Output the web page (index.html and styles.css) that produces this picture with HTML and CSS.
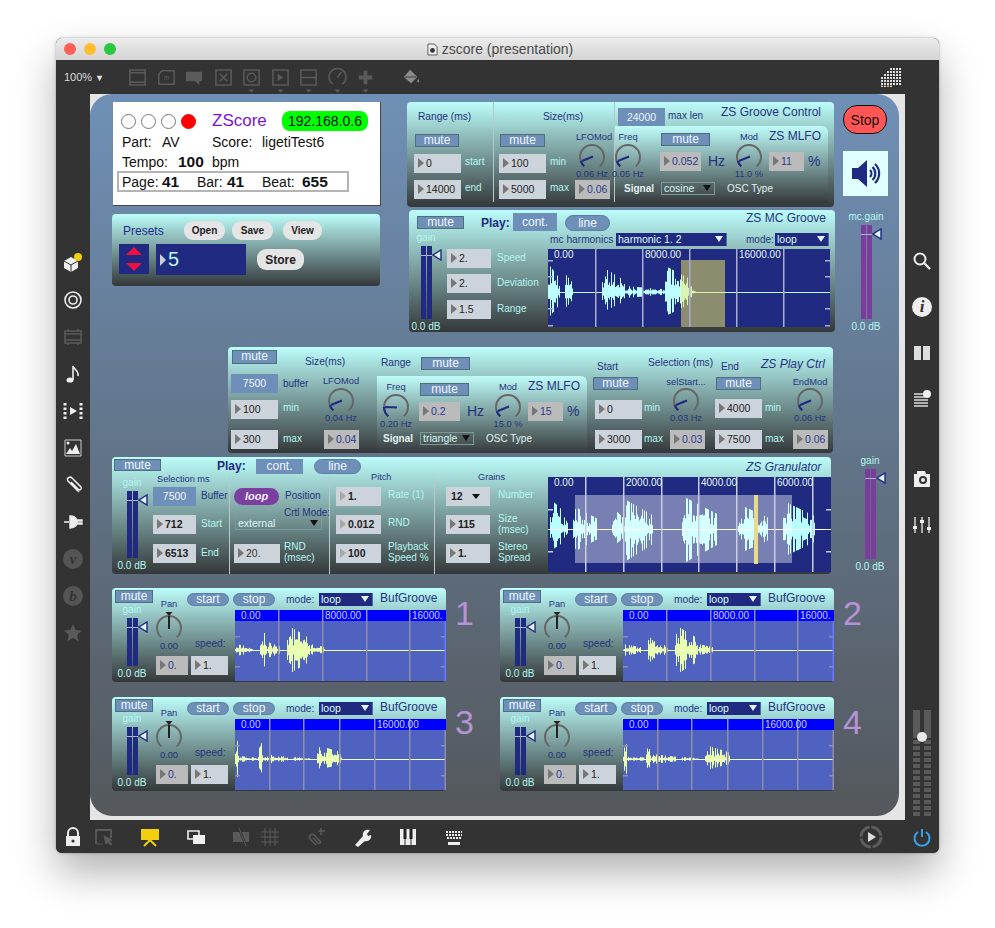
FILE: index.html
```html
<!DOCTYPE html>
<html lang="en">
<head>
  <meta charset="UTF-8" />
  <title>zscore (presentation)</title>
  <link rel="stylesheet" href="styles.css">
</head>
<body>

<!-- shared widget shapes -->
<svg class="defs">
  <symbol id="knob-low" viewBox="0 0 26 26">
    <path d="M5.3 22.2A12 12 0 1 1 20.7 22.2" fill="none" stroke="#666" stroke-width="2"/>
    <path d="M5.3 22.2A12 12 0 0 1 1.7 17.1M14 12.5L3 17" fill="none" stroke="#1f2a80" stroke-width="2"/>
  </symbol>
  <symbol id="knob-flat" viewBox="0 0 26 26">
    <path d="M5.3 22.2A12 12 0 1 1 20.7 22.2" fill="none" stroke="#666" stroke-width="2"/>
    <path d="M5.3 22.2A12 12 0 0 1 1 13M14 13.5L2 13" fill="none" stroke="#1f2a80" stroke-width="2"/>
  </symbol>
  <symbol id="knob-pan" viewBox="0 0 26 26">
    <path d="M5.3 22.2A12 12 0 1 1 20.7 22.2" fill="none" stroke="#666" stroke-width="2"/>
    <path d="M13 14V1" stroke="#222" stroke-width="2"/>
    <path d="M9.5 -3h7L13 1z" fill="#222"/>
  </symbol>
  <symbol id="tri" viewBox="0 0 10 12">
    <path d="M9 1V11L1 6z" fill="#e4f4ff" stroke="#1f2a80" stroke-width="1.4"/>
  </symbol>
</svg>

<div class="window">
  <div class="titlebar">
    <div class="lights"><i class="red"></i><i class="amber"></i><i class="green"></i></div>
    <svg class="doc" viewBox="0 0 12 14"><path d="M1 1h7l3 3v9H1z" fill="#eee" stroke="#555"/><circle cx="6" cy="8" r="2.6" fill="#333"/></svg>
    <span>zscore (presentation)</span>
  </div>

  <div class="toolbar">
    <span class="zoom">100% <b>▾</b></span>
    <div class="tools">
      <svg viewBox="0 0 20 20"><path d="M2 2h16v16H2zM2 5h16M2 15h16" /></svg>
      <svg viewBox="0 0 20 20"><path d="M5 3h13v14H2V6z" /><text x="7" y="13" class="tool-m">m</text></svg>
      <svg viewBox="0 0 20 20"><path class="solid" d="M1 4h17v10h-3v4l-4-4H1z" /></svg>
      <svg viewBox="0 0 20 20"><path d="M2 2h16v16H2zM6 6l8 8M14 6l-8 8" /></svg>
      <svg viewBox="0 0 20 20"><path d="M2 2h16v16H2z" /><circle cx="10" cy="10" r="4.5" /><path class="solid" d="M7 22.500h6l-3 3.500z" /></svg>
      <svg viewBox="0 0 20 20"><path d="M2 2h16v16H2z" /><path class="solid" d="M7 6l6 4-6 4z" /><path class="solid" d="M7 22.500h6l-3 3.500z" /></svg>
      <svg viewBox="0 0 20 20"><path d="M2 2h16v16H2zM2 10h16" /><path class="solid" d="M7 22.500h6l-3 3.500z" /></svg>
      <svg viewBox="0 0 20 20"><path d="M5 17A9 9 0 1 1 15 17M10 10l4-6" /><path class="solid" d="M7 22.500h6l-3 3.500z" /></svg>
      <svg viewBox="0 0 20 20"><path class="thick" d="M10 3v14M3 10h14" /><path class="solid" d="M7 22.500h6l-3 3.500z" /></svg>
    </div>
    <svg class="bucket" viewBox="0 0 20 20"><path d="M9 2l8 8-7 7-8-7z" fill="#8c8c8c"/><path d="M3 10h13" stroke="#333"/><path d="M18 12c1.5 2.500 1.500 4 0 4s-1.500-1.500 0-4z" fill="#8c8c8c"/></svg>
    <svg class="dotgrid" viewBox="0 0 21 19">
      <path d="M9 1h12M6 4h15M3 7h18M0 10h21M0 13h21M0 16h21" stroke="#ddd" stroke-width="2" stroke-dasharray="2 1"/>
      <path d="M0 18.500h12" stroke="#ddd" stroke-width="1.500" stroke-dasharray="2 1"/>
      <path d="M6 18.500h2" stroke="#f0d010" stroke-width="1.500"/>
    </svg>
  </div>

  <div class="main">
    <div class="side side-left">
      <svg class="ic" viewBox="0 0 20 20"><path d="M8 4l7 4v7l-7 4-7-4V8z" fill="#eee"/><path d="M1 8l7 4 7-4M8 12v7" stroke="#333" fill="none"/><circle cx="15" cy="4" r="4" fill="#f0d010"/></svg>
      <svg class="ic" viewBox="0 0 20 20"><circle cx="10" cy="10" r="8" fill="none" stroke="#eee" stroke-width="1.600"/><circle cx="10" cy="10" r="4" fill="none" stroke="#eee" stroke-width="1.600"/></svg>
      <svg class="ic dim" viewBox="0 0 20 20"><path d="M2 4h16v12H2zM2 7h16M2 13h16M5 2v2M15 2v2M5 16v2M15 16v2" fill="none" stroke="#595959" stroke-width="1.600"/></svg>
      <svg class="ic" viewBox="0 0 20 20"><ellipse cx="7" cy="16" rx="3.500" ry="2.600" fill="#eee"/><path d="M10 16V2c1 4 6 4 5 10" fill="none" stroke="#eee" stroke-width="1.600"/></svg>
      <svg class="ic" viewBox="0 0 20 20"><path d="M7 6l7 4-7 4z" fill="#eee"/><path d="M2 2v16M18 2v16" stroke="#eee" stroke-width="3" stroke-dasharray="2.500 2"/></svg>
      <svg class="ic" viewBox="0 0 20 20"><path d="M2 2h16v16H2z" fill="none" stroke="#ccc"/><path d="M3 16l4-6 2 3 4-7 4 10z" fill="#eee"/><circle cx="5" cy="5" r="1.500" fill="#eee"/></svg>
      <svg class="ic" viewBox="0 0 20 20"><path d="M16 17L5 6c-2-3 2-5 4-3l9 9c1 2-1 4-3 2L8 7" fill="none" stroke="#eee" stroke-width="1.500"/></svg>
      <svg class="ic" viewBox="0 0 20 20"><path d="M1 10h5M7 4v12c3 0 6-2 7-4h5v-1h-5V9h5V8h-5c-1-2-4-4-7-4z" fill="#eee" stroke="#eee" stroke-width="1.400"/></svg>
      <div class="round-ic"><i>v</i></div>
      <div class="round-ic"><i>b</i></div>
      <svg class="ic dim" viewBox="0 0 20 20"><path d="M10 1l2.700 6 6.300.6-4.800 4.200 1.500 6.400L10 15l-5.700 3.200 1.500-6.400L1 7.600 7.300 7z" fill="#595959"/></svg>
    </div>

    <div class="canvas">
      <div class="patch">

        <!-- status card -->
        <div class="zs-card">
          <div class="zs-head">
            <div class="leds"><i></i><i></i><i></i><i class="on"></i></div>
            <span class="zs-name">ZScore</span>
            <span class="zs-ip">192.168.0.6</span>
          </div>
          <div class="zs-row zs-row-part"><span>Part:</span><span>AV</span><span>Score:</span><span>ligetiTest6</span></div>
          <div class="zs-row zs-row-tempo"><span>Tempo:</span><b>100</b><span>bpm</span></div>
          <div class="zs-row zs-row-pos"><span>Page:</span><b>41</b><span>Bar:</span><b>41</b><span>Beat:</span><b>655</b></div>
        </div>

        <!-- presets -->
        <div class="panel presets">
          <span class="presets-title">Presets</span>
          <div class="presets-btns"><button>Open</button><button>Save</button><button>View</button></div>
          <div class="updown"><svg viewBox="0 0 30 30"><path d="M15 3l8 8H7zM15 27l-8-8h16z" fill="#f01040"/></svg></div>
          <div class="preset-num">5</div>
          <button class="store">Store</button>
        </div>

        <!-- groove control -->
        <div class="panel gc">
          <span class="lbl dk big gc-range">Range (ms)</span>
          <span class="lbl dk big gc-size">Size(ms)</span>
          <div class="mute gc-m1">mute</div>
          <div class="mute gc-m2">mute</div>
          <div class="num gc-n1">0</div><span class="lbl lt gc-l1">start</span>
          <div class="num gc-n2">14000</div><span class="lbl lt gc-l2">end</span>
          <div class="num gc-n3">100</div><span class="lbl lt gc-l3">min</span>
          <div class="num gc-n4">5000</div><span class="lbl lt gc-l4">max</span>
          <span class="lbl dk ctr gc-lfo">LFOMod</span>
          <svg class="knob gc-k"><use href="#knob-low"/></svg>
          <span class="lbl dk ctr gc-hz">0.06 Hz</span>
          <div class="num gray small gc-n5">0.06</div>
          <i class="divider gc-d1"></i>
          <i class="divider gc-d2"></i>
          <div class="num flat gc-max">24000</div><span class="lbl dk gc-maxl">max len</span>
          <span class="title gc-title">ZS Groove Control</span>
          <div class="mlfo gc-mlfo">
            <div class="mlfo-body">
              <span class="lbl dk ctr m-freq-l">Freq</span>
              <svg class="knob m-freq-k"><use href="#knob-low"/></svg>
              <span class="lbl dk ctr m-freq-v">0.05 Hz</span>
              <div class="mute m-mute">mute</div>
              <div class="num gray m-num">0.052</div>
              <span class="m-hz">Hz</span>
              <span class="lbl dk ctr m-mod-l">Mod</span>
              <svg class="knob m-mod-k"><use href="#knob-low"/></svg>
              <span class="lbl dk ctr m-mod-v">11.0 %</span>
              <span class="title m-title">ZS MLFO</span>
              <div class="num gray small m-num2">11</div>
              <span class="m-pct">%</span>
              <span class="lbl wh strong m-sig">Signal</span>
              <div class="menu m-menu">cosine</div>
              <span class="lbl wh m-osc">OSC Type</span>
            </div>
          </div>
        </div>

        <!-- mc groove -->
        <div class="panel mc">
          <div class="mute mc-mute">mute</div>
          <span class="play-l mc-play">Play:</span>
          <div class="num flat mc-cont">cont.</div>
          <div class="pill mc-line">line</div>
          <span class="title mc-title">ZS MC Groove</span>
          <div class="gain mc-gain">
            <span class="lt">gain</span>
            <div class="meter meter-mc"><svg class="tri"><use href="#tri"/></svg></div>
            <span class="lt">0.0 dB</span>
          </div>
          <div class="num mc-n1">2.</div><span class="lbl lt mc-l1">Speed</span>
          <div class="num mc-n2">2.</div><span class="lbl lt mc-l2">Deviation</span>
          <div class="num mc-n3">1.5</div><span class="lbl lt mc-l3">Range</span>
          <span class="lbl dk big mc-harm">mc harmonics</span>
          <div class="menu blue mc-menu1">harmonic 1. 2</div>
          <span class="lbl dk mc-mode">mode:</span>
          <div class="menu blue mc-menu2">loop</div>
          <div class="wave wave-mc" data-wave="mc">
            <span class="mc-t1">0.00</span><span class="mc-t2">8000.00</span><span class="mc-t3">16000.00</span>
          </div>
        </div>

        <!-- play ctrl -->
        <div class="panel pc">
          <div class="mute pc-m1">mute</div>
          <span class="lbl dk big pc-size">Size(ms)</span>
          <span class="lbl dk big pc-range">Range</span>
          <div class="mute pc-m2">mute</div>
          <div class="num flat pc-buf">7500</div><span class="lbl dk pc-bufl">buffer</span>
          <div class="num pc-n1">100</div><span class="lbl lt pc-l1">min</span>
          <div class="num pc-n2">300</div><span class="lbl lt pc-l2">max</span>
          <span class="lbl dk ctr pc-lfo">LFOMod</span>
          <svg class="knob pc-k1"><use href="#knob-low"/></svg>
          <span class="lbl dk ctr pc-lfov">0.04 Hz</span>
          <div class="num gray small pc-n3">0.04</div>
          <div class="mlfo mlfo-play">
            <div class="mlfo-body">
              <span class="lbl dk ctr m-freq-l">Freq</span>
              <svg class="knob m-freq-k"><use href="#knob-flat"/></svg>
              <span class="lbl dk ctr m-freq-v">0.20 Hz</span>
              <div class="mute m-mute">mute</div>
              <div class="num gray m-num">0.2</div>
              <span class="m-hz">Hz</span>
              <span class="lbl dk ctr m-mod-l">Mod</span>
              <svg class="knob m-mod-k"><use href="#knob-low"/></svg>
              <span class="lbl dk ctr m-mod-v">15.0 %</span>
              <span class="title m-title">ZS MLFO</span>
              <div class="num gray small m-num2">15</div>
              <span class="m-pct">%</span>
              <span class="lbl wh strong m-sig">Signal</span>
              <div class="menu m-menu">triangle</div>
              <span class="lbl wh m-osc">OSC Type</span>
            </div>
          </div>
          <span class="lbl dk pc-start">Start</span>
          <span class="lbl dk big pc-sel">Selection (ms)</span>
          <span class="lbl dk pc-end">End</span>
          <span class="title ital pc-title">ZS Play Ctrl</span>
          <div class="mute pc-m3">mute</div>
          <span class="lbl dk ctr pc-selst">selStart...</span>
          <svg class="knob pc-k2"><use href="#knob-low"/></svg>
          <span class="lbl dk ctr pc-selv">0.03 Hz</span>
          <div class="mute pc-m4">mute</div>
          <span class="lbl dk ctr pc-endm">EndMod</span>
          <svg class="knob pc-k3"><use href="#knob-low"/></svg>
          <span class="lbl dk ctr pc-endv">0.06 Hz</span>
          <div class="num pc-n4">0</div><span class="lbl lt pc-l4">min</span>
          <div class="num pc-n5">3000</div><span class="lbl lt pc-l5">max</span>
          <div class="num gray small pc-n6">0.03</div>
          <div class="num pc-n7">4000</div><span class="lbl lt pc-l7">min</span>
          <div class="num pc-n8">7500</div><span class="lbl lt pc-l8">max</span>
          <div class="num gray small pc-n9">0.06</div>
        </div>

        <!-- granulator -->
        <div class="panel gr">
          <div class="mute gr-mute">mute</div>
          <span class="play-l gr-play">Play:</span>
          <div class="num flat gr-cont">cont.</div>
          <div class="pill gr-line">line</div>
          <div class="gain gr-gain">
            <span class="lt">gain</span>
            <div class="meter meter-gr"><svg class="tri"><use href="#tri"/></svg></div>
            <span class="lt">0.0 dB</span>
          </div>
          <span class="lbl dk head gr-sel">Selection ms</span>
          <div class="num flat gr-n1">7500</div><span class="lbl dk gr-l1">Buffer</span>
          <div class="num bold gr-n2">712</div><span class="lbl lt gr-l2">Start</span>
          <div class="num bold gr-n3">6513</div><span class="lbl lt gr-l3">End</span>
          <i class="divider gr-d1"></i>
          <div class="loop gr-loop">loop</div>
          <span class="lbl dk gr-pos">Position</span>
          <span class="lbl dk gr-crtl">Crtl Mode:</span>
          <div class="menu gr-menu">external</div>
          <div class="num gr-n4 gr-rnd">20.</div>
          <span class="lbl lt two gr-l4">RND<br>(msec)</span>
          <i class="divider gr-d2"></i>
          <span class="lbl dk head gr-pitch">Pitch</span>
          <div class="num bold pale gr-n5">1.</div><span class="lbl lt gr-l5">Rate (1)</span>
          <div class="num bold pale gr-n6">0.012</div><span class="lbl lt gr-l6">RND</span>
          <div class="num bold pale gr-n7">100</div><span class="lbl lt two gr-l7">Playback<br>Speed %</span>
          <i class="divider gr-d3"></i>
          <span class="lbl dk head gr-grains">Grains</span>
          <div class="menu light gr-n8">12</div><span class="lbl lt gr-l8">Number</span>
          <div class="num bold gr-n9">115</div><span class="lbl lt two gr-l9">Size<br>(msec)</span>
          <div class="num bold gr-n10">1.</div><span class="lbl lt two gr-l10">Stereo<br>Spread</span>
          <span class="title ital gr-title">ZS Granulator</span>
          <div class="wave wave-gr" data-wave="gr">
            <span class="gr-t1">0.00</span><span class="gr-t2">2000.00</span><span class="gr-t3">4000.00</span><span class="gr-t4">6000.00</span>
          </div>
        </div>

        <!-- buffer players -->
        <div class="panel buf buf-1">
          <div class="mute b-mute">mute</div>
          <div class="gain b-gain"><span class="lt">gain</span><div class="meter meter-b"><svg class="tri"><use href="#tri"/></svg></div><span class="lt">0.0 dB</span></div>
          <span class="lbl dk ctr b-pan">Pan</span>
          <svg class="knob b-knob"><use href="#knob-pan"/></svg>
          <span class="lbl dk ctr b-panv">0.00</span>
          <div class="num gray b-n1">0.</div>
          <span class="lbl dk big b-speed">speed:</span>
          <div class="num b-n2">1.</div>
          <div class="pill b-start">start</div>
          <div class="pill b-stop">stop</div>
          <span class="lbl dk big b-mode">mode:</span>
          <div class="menu blue b-menu">loop</div>
          <span class="title b-title">BufGroove</span>
          <div class="wave wave-b" data-wave="b1"><span class="b-t1">0.00</span><span class="b-t2">8000.00</span><span class="b-t3">16000.</span></div>
          <span class="digit">1</span>
        </div>
        <div class="panel buf buf-2">
          <div class="mute b-mute">mute</div>
          <div class="gain b-gain"><span class="lt">gain</span><div class="meter meter-b"><svg class="tri"><use href="#tri"/></svg></div><span class="lt">0.0 dB</span></div>
          <span class="lbl dk ctr b-pan">Pan</span>
          <svg class="knob b-knob"><use href="#knob-pan"/></svg>
          <span class="lbl dk ctr b-panv">0.00</span>
          <div class="num gray b-n1">0.</div>
          <span class="lbl dk big b-speed">speed:</span>
          <div class="num b-n2">1.</div>
          <div class="pill b-start">start</div>
          <div class="pill b-stop">stop</div>
          <span class="lbl dk big b-mode">mode:</span>
          <div class="menu blue b-menu">loop</div>
          <span class="title b-title">BufGroove</span>
          <div class="wave wave-b" data-wave="b1"><span class="b-t1">0.00</span><span class="b-t2">8000.00</span><span class="b-t3">16000.</span></div>
          <span class="digit">2</span>
        </div>
        <div class="panel buf buf-3">
          <div class="mute b-mute">mute</div>
          <div class="gain b-gain"><span class="lt">gain</span><div class="meter meter-b"><svg class="tri"><use href="#tri"/></svg></div><span class="lt">0.0 dB</span></div>
          <span class="lbl dk ctr b-pan">Pan</span>
          <svg class="knob b-knob"><use href="#knob-pan"/></svg>
          <span class="lbl dk ctr b-panv">0.00</span>
          <div class="num gray b-n1">0.</div>
          <span class="lbl dk big b-speed">speed:</span>
          <div class="num b-n2">1.</div>
          <div class="pill b-start">start</div>
          <div class="pill b-stop">stop</div>
          <span class="lbl dk big b-mode">mode:</span>
          <div class="menu blue b-menu">loop</div>
          <span class="title b-title">BufGroove</span>
          <div class="wave wave-b" data-wave="b3"><span class="b-t1">0.00</span><span class="b-t4">16000.00</span></div>
          <span class="digit">3</span>
        </div>
        <div class="panel buf buf-4">
          <div class="mute b-mute">mute</div>
          <div class="gain b-gain"><span class="lt">gain</span><div class="meter meter-b"><svg class="tri"><use href="#tri"/></svg></div><span class="lt">0.0 dB</span></div>
          <span class="lbl dk ctr b-pan">Pan</span>
          <svg class="knob b-knob"><use href="#knob-pan"/></svg>
          <span class="lbl dk ctr b-panv">0.00</span>
          <div class="num gray b-n1">0.</div>
          <span class="lbl dk big b-speed">speed:</span>
          <div class="num b-n2">1.</div>
          <div class="pill b-start">start</div>
          <div class="pill b-stop">stop</div>
          <span class="lbl dk big b-mode">mode:</span>
          <div class="menu blue b-menu">loop</div>
          <span class="title b-title">BufGroove</span>
          <div class="wave wave-b" data-wave="b3"><span class="b-t1">0.00</span><span class="b-t4">16000.00</span></div>
          <span class="digit">4</span>
        </div>

        <!-- master -->
        <button class="stop-btn">Stop</button>
        <div class="speaker">
          <svg viewBox="0 0 45 45"><path d="M9 17h6l9-8v27l-9-8H9z" fill="#1f2a80"/><path d="M27 19a5 5 0 0 1 0 7M29.500 16a9 9 0 0 1 0 13M32 13a13 13 0 0 1 0 19" fill="none" stroke="#1f2a80" stroke-width="2.200"/></svg>
        </div>
        <div class="gain gain-mc"><span class="lt">mc.gain</span><div class="meter meter-purple meter-m1"><svg class="tri"><use href="#tri"/></svg></div><span class="lt">0.0 dB</span></div>
        <div class="gain gain-gr"><span class="lt">gain</span><div class="meter meter-purple meter-m2"><svg class="tri"><use href="#tri"/></svg></div><span class="lt">0.0 dB</span></div>
      </div>
    </div>

    <div class="side side-right">
      <svg class="ic" viewBox="0 0 20 20"><circle cx="8" cy="8" r="5.500" fill="none" stroke="#eee" stroke-width="2"/><path d="M12 12l6 6" stroke="#eee" stroke-width="2.400"/></svg>
      <div class="info-ic"><i>i</i></div>
      <svg class="ic" viewBox="0 0 20 20"><path d="M2 3h7v14H2zM11 3h7v14h-7z" fill="#ddd"/></svg>
      <svg class="ic" viewBox="0 0 20 20"><path d="M2 5h11M2 8h11M2 11h14M2 14h14M2 17h14" stroke="#ddd" stroke-width="1.600"/><circle cx="15" cy="5" r="4" fill="#eee"/></svg>
      <svg class="ic ic-cam" viewBox="0 0 20 20"><path d="M2 5h3V2h8l1 3h4v13H2z" fill="#eee"/><circle cx="11" cy="11" r="4" fill="#333"/><circle cx="11" cy="11" r="2" fill="#eee"/></svg>
      <svg class="ic" viewBox="0 0 20 20"><path d="M3 2v16M10 2v16M17 2v16" stroke="#ddd" stroke-width="1.400"/><path d="M1 11h4v3H1zM8 5h4v3H8zM15 12h4v3h-4z" fill="#eee"/></svg>
      <div class="level">
        <div class="level-bar"></div>
        <div class="level-bar"></div>
        <i class="level-knob"></i>
      </div>
    </div>
  </div>

  <div class="bottombar">
    <svg class="ic" viewBox="0 0 20 20"><path d="M5 9V6a5 5 0 0 1 10 0v3" fill="none" stroke="#eee" stroke-width="2"/><path d="M3 9h14v10H3z" fill="#eee"/><circle cx="10" cy="14" r="1.600" fill="#333"/></svg>
    <svg class="ic bb-tight" viewBox="0 0 20 20"><path d="M2 17V3h15v8" fill="none" stroke="#5a5a5a" stroke-width="1.800"/><path d="M2 17h7M10 9l8 4-3 1 3 3-2 1-2-3-2 2z" fill="#5a5a5a" stroke="#5a5a5a"/></svg>
    <svg class="ic bb" viewBox="0 0 20 20"><path d="M1 2h18v11H1z" fill="#f2d010"/><path d="M10 13l-6 6M10 13l6 6" stroke="#f2d010" stroke-width="2"/></svg>
    <svg class="ic bb" viewBox="0 0 20 20"><path d="M2 4h11v8H2z" fill="#333" stroke="#eee" stroke-width="1.600"/><path d="M7 8h12v9H7z" fill="#eee"/></svg>
    <svg class="ic bb" viewBox="0 0 20 20"><path d="M1 5h16v10H1z" fill="#5a5a5a"/><path d="M7 1l7 18" stroke="#333" stroke-width="2.400"/><path d="M7 1l7 18" stroke="#5a5a5a"/></svg>
    <svg class="ic bb-grid" viewBox="0 0 20 20"><path d="M5 1v18M10 1v18M15 1v18M1 5h18M1 10h18M1 15h18" stroke="#5a5a5a"/></svg>
    <svg class="ic bb" viewBox="0 0 20 20"><path d="M10 18L4 12c-2-3 2-6 4-4l6 6c2 2-1 3-2 2L7 11" fill="none" stroke="#5a5a5a" stroke-width="1.500"/><path d="M15 1v7M12 4h7" stroke="#5a5a5a" stroke-width="1.500"/></svg>
    <svg class="ic bb" viewBox="0 0 20 20"><path d="M3 18L11 9c-1-4 2-7 7-6l-3 4 1 2 3-1c1 4-3 7-6 6l-7 6z" fill="#eee"/></svg>
    <svg class="ic bb" viewBox="0 0 20 20"><path d="M2 2h16v16H2z" fill="#eee"/><path d="M7 2v16M13 2v16" stroke="#333"/><path d="M5.500 2h3v10h-3zM11.500 2h3v10h-3z" fill="#222"/></svg>
    <svg class="ic bb" viewBox="0 0 20 20"><path d="M2 5h16M2 8h16M3 11h14" stroke="#eee" stroke-width="2" stroke-dasharray="2 1"/><path d="M4 15h12v3H4z" fill="#eee"/></svg>
    <svg class="ic bb-play" viewBox="0 0 24 24"><circle cx="12" cy="12" r="10" fill="none" stroke="#5c5c5c" stroke-width="3" stroke-dasharray="14 1.700"/><path d="M9 7l8 5-8 5z" fill="#ddd"/></svg>
    <svg class="ic bb-power" viewBox="0 0 20 20"><path d="M6 5a7.500 7.500 0 1 0 8 0M10 2v8" fill="none" stroke="#3aa0e8" stroke-width="2"/></svg>
  </div>
</div>

<script src="waves.js"></script>
</body>
</html>
```

FILE: styles.css
```css
* {
  box-sizing: border-box;
}
body {
  margin: 0;
  padding: 38px 0 0 56px;
  background: #fff;
  font-family: "Liberation Sans", Arial, sans-serif;
  height: 928px;
  overflow: hidden;
}
.defs {
  position: absolute;
  width: 0;
  height: 0;
}
symbol {
  overflow: visible;
}

/* Window frame */
.window {
  width: 883px;
  height: 815px;
  display: flex;
  flex-direction: column;
  border-radius: 6px;
  background: #333;
  box-shadow: 0 20px 40px rgba(0,0,0,0.3), 0 0 3px rgba(0,0,0,0.3);
}
.titlebar {
  height: 22px;
  flex: none;
  display: flex;
  align-items: center;
  justify-content: center;
  gap: 4px;
  position: relative;
  padding-left: 5px;
  background: linear-gradient(#ececec, #d4d4d4);
  border-radius: 6px 6px 0 0;
  font-size: 14px;
  color: #4a4a4a;
}
.lights {
  position: absolute;
  left: 8px;
  top: 5px;
  display: flex;
  gap: 8px;
}
.lights i {
  width: 12px;
  height: 12px;
  border-radius: 50%;
}
.lights .red { background: #ff5f57; }
.lights .amber { background: #ffbd2e; }
.lights .green { background: #28c940; }
.doc {
  width: 11px;
  height: 13px;
}
.toolbar {
  height: 34px;
  flex: none;
  display: flex;
  align-items: center;
  padding: 0 37px 0 8px;
  background: #333;
}
.zoom {
  width: 64px;
  font-size: 11px;
  color: #ddd;
}
.zoom b {
  font-size: 10px;
  margin-left: 2px;
}
.tools {
  display: flex;
  gap: 9.500px;
}
.tools svg {
  width: 19px;
  height: 19px;
  overflow: visible;
  fill: none;
  stroke: #5a5a5a;
  stroke-width: 1.600;
}
.tools .solid {
  fill: #5a5a5a;
  stroke: none;
}
.tools .thick {
  stroke-width: 4;
}
.tool-m {
  font: italic 8px "Liberation Serif", serif;
  fill: #5a5a5a;
  stroke: none;
}
.bucket {
  width: 18px;
  height: 18px;
  margin-left: 27px;
}
.dotgrid {
  width: 21px;
  height: 19px;
  margin-left: auto;
}
.main {
  flex: 1;
  display: flex;
  min-height: 0;
}
.side {
  width: 34px;
  flex: none;
  display: flex;
  flex-direction: column;
  align-items: center;
  background: #333;
}
.side-left {
  padding-top: 159px;
  gap: 17px;
}
.side-right {
  padding-top: 157px;
  gap: 26px;
  padding-bottom: 2px;
}
.ic {
  width: 20px;
  height: 20px;
  flex: none;
}
.ic-cam {
  margin-top: 34px;
}
.round-ic {
  width: 20px;
  height: 20px;
  border-radius: 50%;
  background: #555;
  display: flex;
  align-items: center;
  justify-content: center;
  font: italic bold 15px "Liberation Serif", serif;
  color: #333;
}
.info-ic {
  width: 20px;
  height: 20px;
  border-radius: 50%;
  background: #eee;
  display: flex;
  align-items: center;
  justify-content: center;
  font: italic bold 17px "Liberation Serif", serif;
  color: #333;
}
.level {
  margin-top: auto;
  height: 108px;
  width: 18px;
  position: relative;
  display: flex;
  justify-content: space-between;
}
.level-bar {
  width: 7px;
  background:
    linear-gradient(#5a5a5a 27px, transparent 27px),
    repeating-linear-gradient(#5a5a5a 0 4px, #333 4px 6px);
}
.level-knob {
  position: absolute;
  left: 4px;
  top: 22px;
  width: 10px;
  height: 10px;
  border-radius: 50%;
  background: #e8e8e8;
}
.bottombar {
  height: 33px;
  flex: none;
  display: flex;
  align-items: center;
  padding: 0 7px;
  background: #333;
  border-radius: 0 0 6px 6px;
}
.bb {
  margin-left: 26px;
}
.bb-tight {
  margin-left: 11px;
}
.bb-grid {
  margin-left: 8px;
}
.bb-play {
  width: 24px;
  height: 24px;
  margin-left: auto;
}
.bb-power {
  margin-left: 29px;
}

/* Patcher canvas */
.canvas {
  width: 815px;
  background: #e5e5e5;
}
.patch {
  position: relative;
  width: 809px;
  height: 722px;
  border-radius: 22px;
  background: linear-gradient(#6f90b6, #54585c);
}

/* Shared widgets */
.panel {
  position: absolute;
  border-radius: 4px;
  background: linear-gradient(#bcfdfa, #34383a);
}
.panel > *, .mlfo-body > * {
  position: absolute;
}
.lbl {
  font-size: 10px;
  line-height: 12px;
  white-space: nowrap;
}
.lbl.big {
  font-size: 10.200px;
}
.lbl.head {
  font-size: 9.200px;
}
.dk {
  color: #25337f;
}
.lt {
  color: #b5f7f2;
}
.wh {
  color: #e2f4f2;
}
.strong {
  font-weight: bold;
}
.lbl.ctr {
  width: 50px;
  text-align: center;
  font-size: 9.300px;
}
.two {
  line-height: 10.500px;
}
.title {
  font-size: 12px;
  line-height: 16px;
  color: #25337f;
  white-space: nowrap;
}
.ital {
  font-style: italic;
}
.play-l {
  font-size: 12px;
  font-weight: bold;
  color: #1f2a80;
  line-height: 14px;
}
.mute {
  height: 13px;
  background: #6d8fb8;
  border: 1px solid #4f6f7c;
  color: #f0f8ff;
  font-size: 12px;
  line-height: 11px;
  text-align: center;
}
.pill {
  border-radius: 9px;
  background: #6d8fb8;
  border: 1px solid #5f7fa0;
  color: #f0f8ff;
  font-size: 12px;
  line-height: 12px;
  text-align: center;
}
.num {
  width: 47px;
  height: 19px;
  background: #cdd3da;
  color: #222;
  font-size: 10.500px;
  line-height: 19px;
  padding-left: 12px;
}
.num::before {
  content: "";
  position: absolute;
  left: 4px;
  top: 4px;
  border-left: 6px solid #777;
  border-top: 5.500px solid transparent;
  border-bottom: 5.500px solid transparent;
}
.num.gray {
  background: #bbb;
  color: #2c3a90;
}
.num.small {
  width: 35px;
}
.num.bold {
  font-weight: bold;
}
.num.pale::before {
  border-left-color: #a8a8a8;
}
.num.flat {
  background: #6d8fb8;
  color: #eef6ff;
  padding-left: 0;
  text-align: center;
}
.num.flat::before {
  display: none;
}
.menu {
  height: 13px;
  border: 1px solid #7d9898;
  color: #d8f8f5;
  font-size: 10.500px;
  line-height: 11px;
  padding-left: 2px;
}
.menu::after {
  content: "";
  position: absolute;
  right: 3px;
  top: 2px;
  border-top: 6px solid #111;
  border-left: 4px solid transparent;
  border-right: 4px solid transparent;
}
.menu.blue {
  background: #1f2a80;
  border: none;
  border-right: 1px solid #5068a0;
  line-height: 13px;
  color: #dff;
}
.menu.blue::after {
  border-top-color: #e4f4ff;
  top: 3px;
}
.menu.light {
  background: #cdd3da;
  border: none;
  color: #222;
  font-weight: bold;
  line-height: 19px;
  padding-left: 5px;
}
.menu.light::after {
  top: 7px;
  right: 10px;
  border-top-width: 5px;
}
.knob {
  width: 26px;
  height: 26px;
  overflow: visible;
}
.divider {
  width: 1px;
  background: #b8c8c8;
}
.gain {
  display: flex;
  flex-direction: column;
  align-items: center;
  width: 40px;
  font-size: 10px;
  line-height: 12px;
  white-space: nowrap;
}
.meter {
  position: relative;
  width: 11px;
  margin: 2px 0;
  background: linear-gradient(to right, #1f2a80 5px, transparent 5px, transparent 6px, #1f2a80 6px);
}
.meter::before {
  content: "";
  position: absolute;
  left: 0;
  right: 0;
  top: 9px;
  height: 1px;
  background: #a9b9c9;
}
.meter-purple {
  background: linear-gradient(to right, #7a3d9c 5px, transparent 5px, transparent 6px, #7a3d9c 6px);
}
.tri {
  position: absolute;
  left: 11px;
  top: 3px;
  width: 10px;
  height: 12px;
}
.meter-mc { height: 73px; }
.meter-gr { height: 67px; }
.meter-b { height: 48px; }
.meter-m1 { height: 94px; }
.meter-m2 { height: 90px; }
.wave {
  overflow: hidden;
  background: #1f2a80;
  font-size: 10px;
  line-height: 12px;
  color: #e4f8fa;
}
.wave svg {
  position: absolute;
  left: 0;
  top: 0;
}
.wave span {
  position: absolute;
  top: 0;
  white-space: nowrap;
}

/* Status card */
.zs-card {
  position: absolute;
  left: 23px;
  top: 8px;
  width: 268px;
  height: 104px;
  padding: 9px 0 0 8px;
  background: #fff;
  border-right: 1px solid #445;
  border-bottom: 1px solid #445;
  font-size: 14px;
  line-height: 16px;
  color: #111;
}
.zs-head {
  display: flex;
  align-items: center;
  height: 20px;
}
.leds {
  display: flex;
  gap: 5px;
  width: 91px;
}
.leds i {
  width: 15px;
  height: 15px;
  border-radius: 50%;
  border: 1px solid #777;
}
.leds .on {
  background: #ff0000;
  border-color: #ff0000;
}
.zs-name {
  width: 70px;
  font-size: 17px;
  color: #7a14d8;
}
.zs-ip {
  width: 86px;
  height: 20px;
  border-radius: 8px;
  background: #00ff00;
  text-align: center;
  line-height: 20px;
}
.zs-row {
  display: grid;
  padding-left: 1px;
  white-space: nowrap;
}
.zs-row b {
  font-size: 15.500px;
}
.zs-row-part {
  grid-template-columns: 40px 50px 50px 1fr;
  margin-top: 3px;
}
.zs-row-tempo {
  grid-template-columns: 56px 34px 1fr;
  margin-top: 4px;
}
.zs-row-pos {
  position: absolute;
  left: 4px;
  top: 69px;
  width: 232px;
  height: 21px;
  padding: 1px 0 0 3px;
  grid-template-columns: 40px 35px 30px 35px 40px 1fr;
  border: 2px solid #b4b4b4;
}

/* Presets */
.presets {
  left: 22px;
  top: 120px;
  width: 268px;
  height: 72px;
}
.presets-title {
  left: 11px;
  top: 10px;
  font-size: 12px;
  color: #1f2a8a;
}
.presets-btns {
  left: 72px;
  top: 7px;
  display: flex;
  gap: 7px;
}
.presets-btns button, .store {
  height: 19px;
  padding: 0;
  width: 41px;
  border: none;
  border-radius: 9px;
  background: #e5e5e5;
  font: bold 10px "Liberation Sans", sans-serif;
  color: #222;
}
.presets-btns button:last-child {
  margin-left: 3px;
  width: 39px;
}
.updown {
  left: 7px;
  top: 30px;
  width: 30px;
  height: 30px;
  background: #1f2a80;
}
.preset-num {
  left: 44px;
  top: 30px;
  width: 90px;
  height: 31px;
  padding-left: 12px;
  background: #1f2a80;
  color: #b8f8ff;
  font-size: 20px;
  line-height: 30px;
}
.preset-num::before {
  content: "";
  position: absolute;
  left: 4px;
  top: 10px;
  border-left: 6px solid #c8d0d8;
  border-top: 6px solid transparent;
  border-bottom: 6px solid transparent;
}
.store {
  left: 145px;
  top: 35px;
  width: 47px;
  height: 21px;
  font-size: 12px;
}

/* MLFO sub panel, used twice */
.mlfo {
  border-radius: 0 6px 0 0;
  background: linear-gradient(#bffdfa, #35393b);
}
.mlfo-body {
  position: absolute;
  left: 0;
  top: 0;
  right: 0;
  bottom: 0;
}
.gc-mlfo { left: 208px; top: 24px; width: 213px; height: 77px; }
.mlfo-play { left: 149px; top: 29px; width: 210px; height: 77px; }
.mlfo-play .mlfo-body { left: -3px; }
.m-freq-l { left: -12px; top: 5px; }
.m-freq-k { left: 0; top: 18px; }
.m-freq-v { left: -12px; top: 42px; }
.mlfo-play .m-freq-l { left: -3px; }
.mlfo-play .m-freq-k { left: 9px; }
.mlfo-play .m-freq-v { left: -3px; }
.m-mute { left: 46px; top: 7px; width: 49px; }
.m-num { left: 45px; top: 26px; width: 41px; }
.m-hz, .m-pct { font-size: 14px; line-height: 16px; color: #25337f; }
.m-hz { left: 93px; top: 27px; }
.m-mod-l { left: 109px; top: 5px; }
.m-mod-k { left: 121px; top: 18px; }
.m-mod-v { left: 109px; top: 42px; }
.m-title { left: 154px; top: 2px; }
.m-num2 { left: 154px; top: 26px; }
.m-pct { left: 193px; top: 27px; }
.m-sig { left: 9px; top: 57px; }
.m-menu { left: 46px; top: 56px; width: 54px; }
.m-osc { left: 112px; top: 57px; }

/* Groove control */
.gc { left: 317px; top: 8px; width: 427px; height: 105px; }
.gc-range { left: 11px; top: 9px; }
.gc-size { left: 136px; top: 9px; }
.gc-m1 { left: 8px; top: 32px; width: 44px; }
.gc-m2 { left: 93px; top: 32px; width: 45px; }
.gc-n1 { left: 7px; top: 52px; }
.gc-n2 { left: 7px; top: 78px; }
.gc-n3 { left: 92px; top: 52px; }
.gc-n4 { left: 92px; top: 78px; }
.gc-l1, .gc-l3 { top: 54px; }
.gc-l2, .gc-l4 { top: 80px; }
.gc-l1, .gc-l2 { left: 58px; }
.gc-l3, .gc-l4 { left: 143px; }
.gc-lfo { left: 162px; top: 29px; }
.gc-k { left: 172px; top: 42px; }
.gc-hz { left: 160px; top: 66px; }
.gc-n5 { left: 168px; top: 78px; }
.gc-d1 { left: 86px; top: 0; height: 100px; }
.gc-d2 { left: 207px; top: 0; height: 100px; }
.gc-max { left: 211px; top: 6px; }
.gc-maxl { left: 261px; top: 8px; }
.gc-title { left: 314px; top: 2px; }

/* MC groove */
.mc { left: 319px; top: 116px; width: 426px; height: 122px; }
.mc-mute { left: 8px; top: 6px; width: 47px; }
.mc-play { left: 72px; top: 6px; }
.mc-cont { left: 104px; top: 3px; width: 44px; height: 18px; font-size: 12px; line-height: 18px; }
.mc-line { left: 156px; top: 5px; width: 45px; height: 16px; line-height: 14px; }
.mc-title { left: 337px; top: 0; }
.mc-gain { left: -3px; top: 22px; }
.mc-n1 { left: 38px; top: 39px; width: 44px; }
.mc-n2 { left: 38px; top: 64px; width: 44px; }
.mc-n3 { left: 38px; top: 90px; width: 44px; }
.mc-l1, .mc-l2, .mc-l3 { left: 88px; }
.mc-l1 { top: 42px; }
.mc-l2 { top: 67px; }
.mc-l3 { top: 93px; }
.mc-harm { left: 141px; top: 24px; }
.mc-menu1 { left: 207px; top: 23px; width: 111px; }
.mc-mode { left: 337px; top: 24px; }
.mc-menu2 { left: 366px; top: 23px; width: 54px; }
.wave-mc { left: 139px; top: 39px; width: 282px; height: 78px; }
.mc-t1 { left: 6px; }
.mc-t2 { left: 97px; }
.mc-t3 { left: 191px; }

/* Play ctrl */
.pc { left: 138px; top: 253px; width: 605px; height: 106px; }
.pc-m1 { left: 4px; top: 3px; width: 45px; height: 14px; }
.pc-size { left: 77px; top: 9px; }
.pc-range { left: 153px; top: 10px; }
.pc-m2 { left: 193px; top: 10px; width: 49px; }
.pc-buf { left: 3px; top: 27px; }
.pc-bufl { left: 55px; top: 31px; }
.pc-n1 { left: 3px; top: 53px; }
.pc-l1 { left: 55px; top: 55px; }
.pc-n2 { left: 3px; top: 83px; }
.pc-l2 { left: 55px; top: 86px; }
.pc-lfo { left: 88px; top: 28px; }
.pc-k1 { left: 100px; top: 41px; }
.pc-lfov { left: 88px; top: 65px; }
.pc-n3 { left: 96px; top: 83px; }
.pc-start { left: 369px; top: 14px; }
.pc-sel { left: 420px; top: 10px; }
.pc-end { left: 493px; top: 14px; }
.pc-title { left: 533px; top: 9px; }
.pc-m3 { left: 365px; top: 30px; width: 45px; }
.pc-selst { left: 433px; top: 29px; }
.pc-k2 { left: 445px; top: 41px; }
.pc-selv { left: 433px; top: 65px; }
.pc-m4 { left: 488px; top: 30px; width: 45px; }
.pc-endm { left: 557px; top: 29px; }
.pc-k3 { left: 569px; top: 41px; }
.pc-endv { left: 557px; top: 65px; }
.pc-n4 { left: 367px; top: 53px; }
.pc-l4 { left: 416px; top: 55px; }
.pc-n5 { left: 367px; top: 83px; }
.pc-l5 { left: 416px; top: 86px; }
.pc-n6 { left: 442px; top: 83px; }
.pc-n7 { left: 487px; top: 52px; }
.pc-l7 { left: 537px; top: 55px; }
.pc-n8 { left: 487px; top: 83px; }
.pc-l8 { left: 537px; top: 86px; }
.pc-n9 { left: 565px; top: 83px; }

/* Granulator */
.gr { left: 22px; top: 363px; width: 719px; height: 117px; }
.gr-mute { left: 2px; top: 2px; width: 47px; height: 12px; line-height: 10px; }
.gr-play { left: 105px; top: 2px; }
.gr-cont { left: 144px; top: 2px; width: 47px; height: 15px; font-size: 12px; line-height: 15px; }
.gr-line { left: 202px; top: 2px; width: 47px; height: 15px; line-height: 13px; }
.gr-gain { left: 0; top: 20px; }
.gr-sel { left: 45px; top: 16px; }
.gr-n1 { left: 41px; top: 30px; width: 43px; }
.gr-n2 { left: 41px; top: 58px; width: 43px; }
.gr-n3 { left: 41px; top: 87px; width: 43px; }
.gr-l1, .gr-l2, .gr-l3 { left: 89px; }
.gr-l1 { top: 33px; }
.gr-l2 { top: 61px; }
.gr-l3 { top: 90px; }
.gr-d1 { left: 117px; top: 20px; height: 97px; }
.gr-d2 { left: 217px; top: 20px; height: 97px; }
.gr-d3 { left: 322px; top: 20px; height: 97px; }
.gr-loop { left: 122px; top: 31px; width: 45px; height: 17px; border-radius: 9px; background: #7b3fa0; color: #eef; font: italic bold 11px/17px "Liberation Sans", sans-serif; text-align: center; }
.gr-pos { left: 173px; top: 33px; }
.gr-crtl { left: 172px; top: 50px; }
.gr-menu { left: 123px; top: 60px; width: 87px; }
.gr-n4 { left: 122px; top: 87px; width: 46px; }
.gr-rnd { color: #333; }
.gr-l4 { left: 172px; top: 85px; }
.gr-pitch { left: 259px; top: 14px; }
.gr-n5 { left: 224px; top: 30px; width: 45px; }
.gr-n6 { left: 224px; top: 58px; width: 45px; }
.gr-n7 { left: 224px; top: 87px; width: 45px; }
.gr-l5, .gr-l6, .gr-l7 { left: 276px; }
.gr-l5 { top: 32px; }
.gr-l6 { top: 60px; }
.gr-l7 { top: 85px; }
.gr-grains { left: 366px; top: 14px; }
.gr-n8 { left: 334px; top: 30px; width: 44px; height: 19px; }
.gr-n9 { left: 334px; top: 58px; width: 44px; }
.gr-n10 { left: 334px; top: 87px; width: 44px; }
.gr-l8, .gr-l9, .gr-l10 { left: 386px; }
.gr-l8 { top: 32px; }
.gr-l9 { top: 57px; }
.gr-l10 { top: 85px; }
.gr-title { left: 634px; top: 2px; }
.wave-gr { left: 436px; top: 20px; width: 283px; height: 95px; }
.gr-t1 { left: 6px; }
.gr-t2 { left: 78px; }
.gr-t3 { left: 153px; }
.gr-t4 { left: 229px; }

/* Buffer players */
.buf { width: 334px; height: 94px; }
.buf-1 { left: 22px; top: 494px; }
.buf-2 { left: 410px; top: 494px; }
.buf-3 { left: 22px; top: 603px; }
.buf-4 { left: 410px; top: 603px; }
.b-mute { left: 3px; top: 2px; width: 38px; }
.b-gain { left: 0; top: 16px; }
.b-pan { left: 32px; top: 10px; }
.b-knob { left: 44px; top: 27px; }
.b-panv { left: 32px; top: 52px; }
.b-n1 { left: 44px; top: 68px; width: 32px; }
.b-speed { left: 83px; top: 50px; }
.b-n2 { left: 79px; top: 68px; width: 37px; }
.b-start { left: 75px; top: 5px; width: 42px; height: 13px; line-height: 11px; }
.b-stop { left: 121px; top: 5px; width: 42px; height: 13px; line-height: 11px; }
.b-mode { left: 174px; top: 6px; }
.b-menu { left: 207px; top: 5px; width: 54px; }
.b-title { left: 268px; top: 2px; }
.wave-b { left: 123px; top: 22px; width: 211px; height: 71px; background: #4f62c0; color: #c4ccff; }
.b-t1 { left: 6px; }
.b-t2 { left: 90px; }
.b-t3 { left: 177px; }
.b-t4 { left: 142px; }
.digit {
  left: 343px;
  top: 8px;
  font-size: 34px;
  line-height: 34px;
  color: #b493d6;
}

/* Master section */
.stop-btn {
  position: absolute;
  left: 753px;
  top: 11px;
  width: 44px;
  height: 29px;
  padding: 0;
  border: 1px solid #111;
  border-radius: 14px;
  background: #ff5555;
  font: 14px "Liberation Sans", sans-serif;
  color: #111;
}
.speaker {
  position: absolute;
  left: 753px;
  top: 57px;
  width: 45px;
  height: 45px;
  background: #e0ffff;
}
.speaker svg {
  display: block;
}
.gain-mc {
  position: absolute;
  left: 756px;
  top: 117px;
}
.gain-gr {
  position: absolute;
  left: 760px;
  top: 361px;
}
```

FILE: waves.js
```js
// Draws the waveform views. Bursts are [start, end, up, down] in pixels.
var views = {
  mc: {
    w: 282, h: 78, mid: 43, wave: '#bdfcff', line: '#bdfcff', grid: '#a9aed0',
    lines: [47, 94, 141, 188, 235],
    ticks: [11, 27, 59, 76],
    bursts: [[0, 12, 28, 26], [17, 25, 18, 16], [54, 77, 25, 20], [77, 117, 6, 6], [117, 144, 26, 24], [144, 148, 3, 3]],
    select: [133, 11, 44, 67, 'rgba(249,238,92,0.5)']
  },
  gr: {
    w: 283, h: 95, mid: 52, wave: '#b8ffff', line: '#ffffff', grid: '#c8cce4',
    lines: [37, 75, 113, 150, 188, 226, 264],
    ticks: [32, 74],
    bursts: [[2, 20, 30, 22], [25, 49, 23, 23], [64, 76, 22, 18], [76, 105, 30, 33], [134, 169, 33, 35], [190, 220, 25, 25], [235, 267, 28, 28]],
    select: [27, 18, 217, 68, 'rgba(255,255,255,0.4)'],
    bar: [206, 18, 4, 69, '#e8dc8a']
  },
  b1: {
    w: 211, h: 71, mid: 40, head: 11, wave: '#e8ffb0', line: '#f0ffc8', grid: '#8e8ea8',
    lines: [43, 87, 131, 174],
    ticks: [26, 56],
    bursts: [[0, 18, 6, 6], [25, 32, 25, 24], [32, 45, 8, 8], [52, 75, 25, 25], [75, 90, 6, 5]],
    edge: '#6a78ff'
  },
  b3: {
    w: 211, h: 71, mid: 40, head: 11, wave: '#e8ffb0', line: '#f0ffc8', grid: '#8e8ea8',
    lines: [34, 68, 104, 139, 174],
    ticks: [26, 56],
    bursts: [[0, 4, 25, 25], [4, 22, 3, 3], [23, 28, 24, 20], [28, 53, 5, 5], [58, 75, 2, 2], [82, 107, 14, 11]],
    edge: '#8e8ea8'
  }
};

// small seeded random so every render is the same
var seed = 7;
function rnd() {
  seed = (seed * 16807) % 2147483647;
  return seed / 2147483647;
}

function rect(x, y, w, h, fill) {
  return '<rect x="' + x + '" y="' + y + '" width="' + w + '" height="' + h + '" fill="' + fill + '"/>';
}

function bursts(view) {
  var d = '';
  view.bursts.forEach(function (b) {
    for (var x = b[0]; x < b[1]; x++) {
      var t = (x - b[0]) / (b[1] - b[0]);
      var env = Math.min(1, t * 6 + 0.4) * (1 - t * 0.55);
      var spike = rnd() > 0.7 ? 1 : 0.2 + rnd() * 0.5;
      d += 'M' + (x + 0.5) + ' ' + (view.mid - b[2] * env * spike).toFixed(1);
      d += 'V' + (view.mid + b[3] * env * spike).toFixed(1);
    }
  });
  return d;
}

document.querySelectorAll('[data-wave]').forEach(function (el) {
  var view = views[el.dataset.wave];
  var s = '';
  if (view.head) {
    s += rect(0, 0, view.w, view.head, '#0000ff');
  }
  s += '<path d="' + bursts(view) + '" stroke="' + view.wave + '" fill="none"/>';
  s += rect(0, view.mid, view.w, 1, view.line);
  view.ticks.forEach(function (y) {
    s += rect(0, y, 5, 1.5, view.grid) + rect(view.w - 5, y, 5, 1.5, view.grid);
  });
  if (view.select) {
    s += rect.apply(null, view.select);
  }
  if (view.bar) {
    s += rect.apply(null, view.bar);
  }
  view.lines.forEach(function (x) {
    s += rect(x, 0, 1.5, view.h, view.grid);
  });
  if (view.edge) {
    s += rect(view.w - 1.5, view.head, 1.5, view.h, view.edge);
  }
  var svg = document.createElementNS('http://www.w3.org/2000/svg', 'svg');
  svg.setAttribute('width', view.w);
  svg.setAttribute('height', view.h);
  svg.innerHTML = s;
  el.insertBefore(svg, el.firstChild);
});
```
